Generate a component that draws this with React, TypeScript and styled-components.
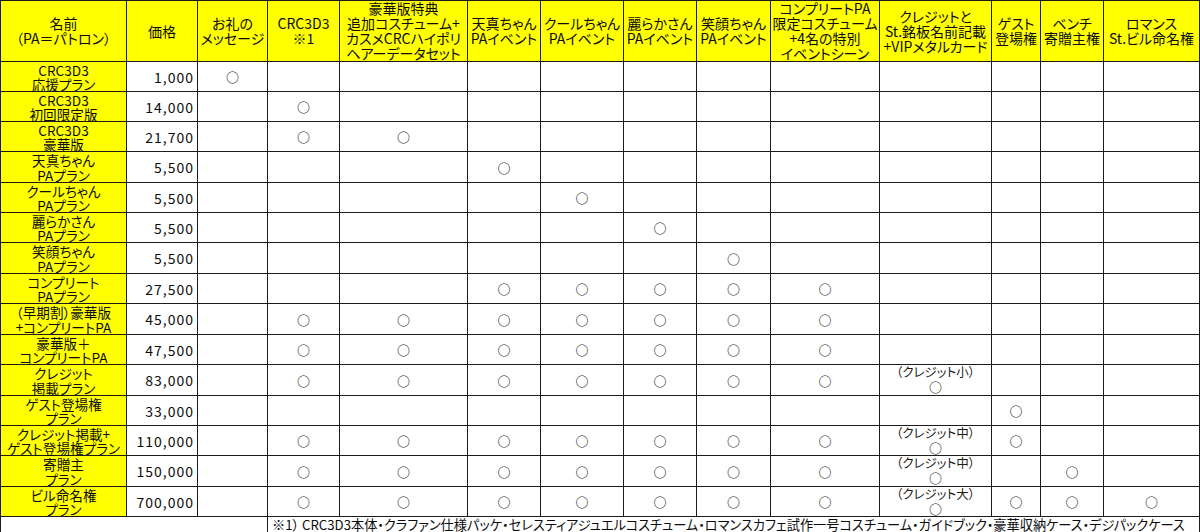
import React from "react";
import styled, { createGlobalStyle } from "styled-components";

const GlobalStyle = createGlobalStyle`
  html, body {
    margin: 0;
    padding: 0;
    background: #ffffff;
  }
  body {
    font-family: "Noto Sans CJK JP", "Noto Sans", sans-serif;
    color: #0c0c0c;
  }
`;

// line positions measured off the sheet: widths are gaps between grid lines
const colWidths = [125, 70, 69, 71, 127, 72, 82, 72, 73, 108, 111, 48, 62, 95];
const rowHeights = [29, 29, 29, 30, 29, 29, 30, 29, 30, 29, 30, 29, 29, 30, 29];

const Sheet = styled.div`
  display: grid;
  grid-template-columns: ${colWidths.map((w) => `${w}px`).join(" ")};
  grid-template-rows: 60px ${rowHeights.map((h) => `${h}px`).join(" ")} 30px;
  gap: 1px;
  padding: 1px;
  width: 1200px;
  box-sizing: border-box;
  background: #1c1c1c;
  font-size: 14px;
  font-feature-settings: "palt" 1;
`;

const HeadCell = styled.div`
  background: #ffff00;
  display: flex;
  align-items: center;
  justify-content: center;
  text-align: center;
  white-space: pre-line;
  line-height: 15px;
`;

const NameCell = styled.div`
  background: #ffff00;
  display: flex;
  align-items: center;
  justify-content: center;
  text-align: center;
  white-space: pre-line;
  line-height: 14.5px;
  padding-top: 1px;
  font-size: 13.6px;
`;

const PriceCell = styled.div`
  background: #ffffff;
  display: flex;
  align-items: center;
  justify-content: flex-end;
  padding-right: 3px;
  letter-spacing: 1px;
  font-size: 14px;
`;

const MarkCell = styled.div`
  background: #ffffff;
  display: flex;
  align-items: center;
  justify-content: center;
  color: #2a2a2a;
  font-size: 13px;
  font-weight: 700;
`;

const CreditCell = styled.div`
  background: #ffffff;
  display: flex;
  flex-direction: column;
  align-items: center;
  line-height: 14.5px;
  font-size: 12.5px;
  color: #1a1a1a;
  position: relative;
  z-index: 1;
`;

const Ring = styled.span`
  color: #2a2a2a;
  font-size: 13px;
  font-weight: 700;
`;

const NoteBlank = styled.div`
  background: #ffffff;
  grid-column: 1 / span 3;
`;

const NoteCell = styled.div`
  background: #ffffff;
  grid-column: 4 / -1;
  padding-left: 4px;
  line-height: 16px;
  white-space: nowrap;
  font-size: 13.2px;
`;

const headers = [
  "名前\n（PA＝パトロン）",
  "価格",
  "お礼の\nメッセージ",
  "CRC3D3\n※1",
  "豪華版特典\n追加コスチューム+\nカスメCRCハイポリ\nヘアーデータセット",
  "天真ちゃん\nPAイベント",
  "クールちゃん\nPAイベント",
  "麗らかさん\nPAイベント",
  "笑顔ちゃん\nPAイベント",
  "コンプリートPA\n限定コスチューム\n+4名の特別\nイベントシーン",
  "クレジットと\nSt.銘板名前記載\n+VIPメタルカード",
  "ゲスト\n登場権",
  "ベンチ\n寄贈主権",
  "ロマンス\nSt.ビル命名権",
];

interface Plan {
  name: string;
  price: string;
  marks: number[];
  credit?: string;
}

const pack = [3, 4, 5, 6, 7, 8, 9];

const plans: Plan[] = [
  { name: "CRC3D3\n応援プラン", price: "1,000", marks: [2] },
  { name: "CRC3D3\n初回限定版", price: "14,000", marks: [3] },
  { name: "CRC3D3\n豪華版", price: "21,700", marks: [3, 4] },
  { name: "天真ちゃん\nPAプラン", price: "5,500", marks: [5] },
  { name: "クールちゃん\nPAプラン", price: "5,500", marks: [6] },
  { name: "麗らかさん\nPAプラン", price: "5,500", marks: [7] },
  { name: "笑顔ちゃん\nPAプラン", price: "5,500", marks: [8] },
  { name: "コンプリート\nPAプラン", price: "27,500", marks: [5, 6, 7, 8, 9] },
  { name: "（早期割）豪華版\n+コンプリートPA", price: "45,000", marks: pack },
  { name: "豪華版＋\nコンプリートPA", price: "47,500", marks: pack },
  { name: "クレジット\n掲載プラン", price: "83,000", marks: pack, credit: "（クレジット小）" },
  { name: "ゲスト登場権\nプラン", price: "33,000", marks: [11] },
  { name: "クレジット掲載+\nゲスト登場権プラン", price: "110,000", marks: [...pack, 11], credit: "（クレジット中）" },
  { name: "寄贈主\nプラン", price: "150,000", marks: [...pack, 12], credit: "（クレジット中）" },
  { name: "ビル命名権\nプラン", price: "700,000", marks: [...pack, 11, 12, 13], credit: "（クレジット大）" },
];

function PlanRow({ plan }: { plan: Plan }) {
  const cells: React.ReactNode[] = [];
  for (let c = 2; c < headers.length; c++) {
    if (c === 10) {
      cells.push(
        <CreditCell key={c}>
          {plan.credit && (
            <>
              <span>{plan.credit}</span>
              <Ring>○</Ring>
            </>
          )}
        </CreditCell>
      );
    } else {
      cells.push(<MarkCell key={c}>{plan.marks.includes(c) ? "○" : ""}</MarkCell>);
    }
  }
  return (
    <>
      <NameCell>{plan.name}</NameCell>
      <PriceCell>{plan.price}</PriceCell>
      {cells}
    </>
  );
}

export default function App() {
  return (
    <>
      <GlobalStyle />
      <Sheet>
        {headers.map((h) => (
          <HeadCell key={h}>{h}</HeadCell>
        ))}
        {plans.map((p) => (
          <PlanRow key={p.name} plan={p} />
        ))}
        <NoteBlank />
        <NoteCell>
          ※1） CRC3D3本体・クラファン仕様パッケ・セレスティアジュエルコスチューム・ロマンスカフェ試作一号コスチューム・ガイドブック・豪華収納ケース・デジパックケース
        </NoteCell>
      </Sheet>
    </>
  );
}
